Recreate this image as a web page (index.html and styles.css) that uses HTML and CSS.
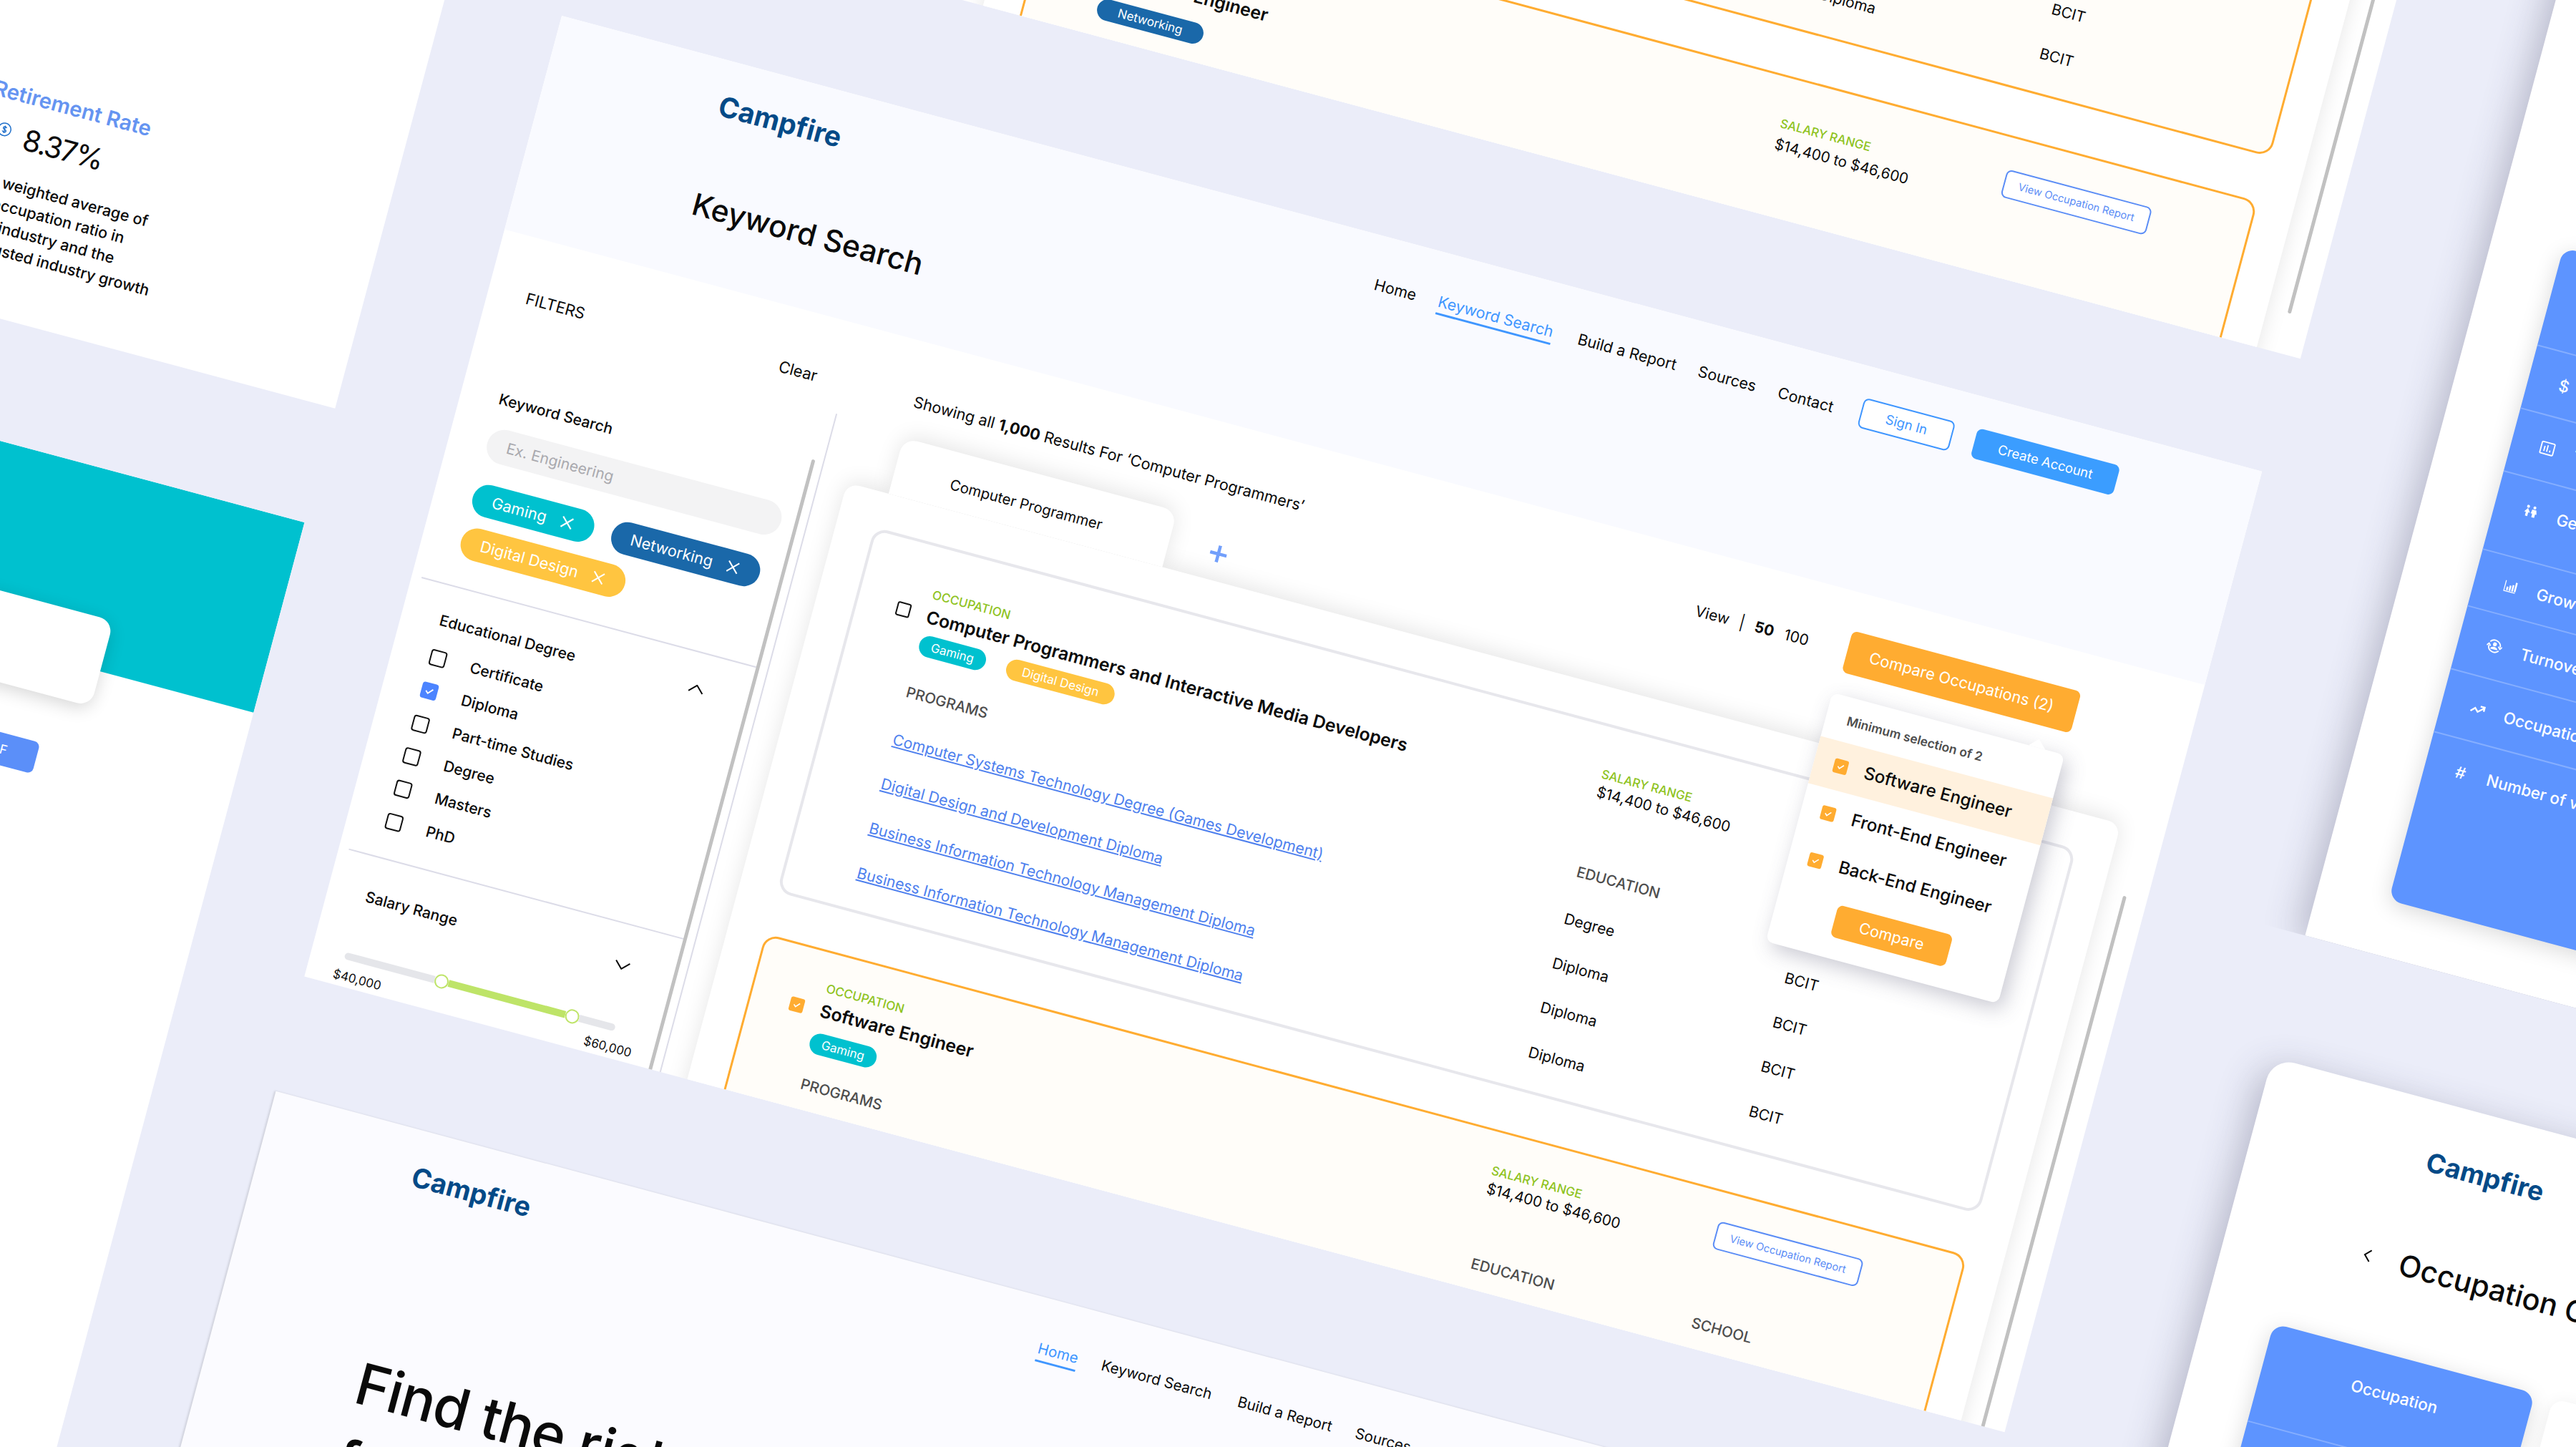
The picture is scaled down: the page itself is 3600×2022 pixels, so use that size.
FILE: index.html
```html
<!DOCTYPE html>
<html lang="en">
<head>
    <meta charset="UTF-8">
    <meta name="viewport" content="width=device-width, initial-scale=1.0">
    <title>Campfire</title>
    <link rel="stylesheet" href="styles.css">
</head>
<body>
<div class="stage">
<div class="canvas">

    <!-- Report detail, top left -->
    <section class="board board-rate">
        <h3 class="rate-title">Retirement Rate</h3>
        <div class="rate-value">
            <svg class="coin" viewBox="0 0 20 20"><circle cx="10" cy="10" r="8.8"/><path d="M12.4 7.6c-.4-1-1.3-1.3-2.4-1.3-1.300 0-2.300.6-2.300 1.800 0 2.600 4.800 1.200 4.800 3.900 0 1.200-1.100 1.800-2.500 1.800-1.300 0-2.300-.5-2.600-1.600M10 4.800v10.400"/></svg>
            <span>8.37%</span>
        </div>
        <p class="rate-text">The weighted average of<br>the occupation ratio in<br>each industry and the<br>unadjusted industry growth</p>
    </section>

    <!-- Landing banner, bottom left -->
    <section class="board board-banner">
        <div class="banner-teal"></div>
        <div class="banner-card"></div>
        <a class="btn-pdf">PDF</a>
    </section>

    <!-- Keyword search scrolled down, top -->
    <section class="board board-top">
        <div class="results">
            <div class="panel panel-top">
                <article class="card card-selected card-tail">
                    <div class="row"><a class="link">Business Information Technology Management Diploma</a><span>Diploma</span><span>BCIT</span></div>
                    <div class="row"><a class="link">Business Information Technology Management Diploma</a><span>Diploma</span><span>BCIT</span></div>
                </article>
                <article class="card card-selected card-low">
                    <div class="card-head">
                        <span class="check check-sm check-orange"><svg viewBox="0 0 16 16"><path d="M4 8.300l2.800 2.700L12 5.300"/></svg></span>
                        <div class="occupation">
                            <span class="eyebrow">OCCUPATION</span>
                            <h2>Software Engineer</h2>
                            <div class="tags"><span class="tag tag-blue">Networking</span></div>
                        </div>
                        <div class="salary">
                            <span class="eyebrow">SALARY RANGE</span>
                            <span class="amount">$14,400 to $46,600</span>
                        </div>
                        <a class="btn-report">View Occupation Report</a>
                    </div>
                </article>
            </div>
            <div class="scrollbar scrollbar-top"></div>
        </div>
    </section>

    <!-- Keyword search -->
    <section class="board board-search">
        <header class="header">
            <div class="header-top">
                <div class="logo">Campfire</div>
                <nav class="nav">
                    <a>Home</a>
                    <a class="active">Keyword Search</a>
                    <a>Build a Report</a>
                    <a>Sources</a>
                    <a>Contact</a>
                </nav>
                <a class="btn btn-outline">Sign In</a>
                <a class="btn btn-solid">Create Account</a>
            </div>
            <h1>Keyword Search</h1>
        </header>

        <div class="content">
            <aside class="sidebar">
                <div class="filters-head"><span>FILTERS</span><span>Clear</span></div>
                <div class="filters">
                    <div class="groups">
                        <div class="group group-keyword">
                            <div class="label">Keyword Search</div>
                            <div class="input">Ex. Engineering</div>
                            <div class="chips">
                                <span class="chip chip-teal">Gaming <svg viewBox="0 0 18 18"><path d="M2 2l14 14M16 2L2 16"/></svg></span>
                                <span class="chip chip-blue">Networking <svg viewBox="0 0 18 18"><path d="M2 2l14 14M16 2L2 16"/></svg></span>
                                <span class="chip chip-yellow">Digital Design <svg viewBox="0 0 18 18"><path d="M2 2l14 14M16 2L2 16"/></svg></span>
                            </div>
                        </div>
                        <div class="group group-degree">
                            <div class="label">Educational Degree <svg viewBox="0 0 22 12"><path d="M1 11L11 1l10 10"/></svg></div>
                            <ul class="options">
                                <li><span class="check"></span>Certificate</li>
                                <li><span class="check check-blue"><svg viewBox="0 0 16 16"><path d="M4 8.300l2.800 2.700L12 5.300"/></svg></span>Diploma</li>
                                <li><span class="check"></span>Part-time Studies</li>
                                <li><span class="check"></span>Degree</li>
                                <li><span class="check"></span>Masters</li>
                                <li><span class="check"></span>PhD</li>
                            </ul>
                        </div>
                        <div class="group group-salary">
                            <div class="label">Salary Range <svg viewBox="0 0 22 12"><path d="M1 1l10 10L21 1"/></svg></div>
                            <div class="slider">
                                <span class="track track-start"></span>
                                <span class="knob"></span>
                                <span class="track track-fill"></span>
                                <span class="knob"></span>
                                <span class="track track-end"></span>
                            </div>
                            <div class="slider-labels"><span>$40,000</span><span>$60,000</span></div>
                        </div>
                    </div>
                    <div class="scrollbar scrollbar-side"></div>
                </div>
            </aside>

            <main class="main">
                <div class="toolbar">
                    <div class="summary">Showing all <b>1,000</b> Results For ‘Computer Programmers’</div>
                    <div class="view"><span>View</span><span>|</span><b>50</b><span>100</span></div>
                    <div class="compare">
                        <a class="btn-compare">Compare Occupations (2)</a>
                        <div class="popup">
                            <div class="popup-note">Minimum selection of 2</div>
                            <div class="popup-item current"><span class="check check-sm check-orange"><svg viewBox="0 0 16 16"><path d="M4 8.300l2.800 2.700L12 5.300"/></svg></span>Software Engineer</div>
                            <div class="popup-item"><span class="check check-sm check-orange"><svg viewBox="0 0 16 16"><path d="M4 8.300l2.800 2.700L12 5.300"/></svg></span>Front-End Engineer</div>
                            <div class="popup-item"><span class="check check-sm check-orange"><svg viewBox="0 0 16 16"><path d="M4 8.300l2.800 2.700L12 5.300"/></svg></span>Back-End Engineer</div>
                            <a class="popup-btn">Compare</a>
                        </div>
                    </div>
                </div>
                <div class="tabs">
                    <div class="tab">Computer Programmer</div>
                    <svg class="plus" viewBox="0 0 24 24"><path d="M12 0v24M0 12h24"/></svg>
                </div>
                <div class="results">
                    <div class="panel">
                        <article class="card">
                            <div class="card-head">
                                <span class="check check-sm"></span>
                                <div class="occupation">
                                    <span class="eyebrow">OCCUPATION</span>
                                    <h2>Computer Programmers and Interactive Media Developers</h2>
                                    <div class="tags"><span class="tag tag-teal">Gaming</span><span class="tag tag-yellow">Digital Design</span></div>
                                </div>
                                <div class="salary">
                                    <span class="eyebrow">SALARY RANGE</span>
                                    <span class="amount">$14,400 to $46,600</span>
                                </div>
                            </div>
                            <div class="row row-head"><span>PROGRAMS</span><span>EDUCATION</span></div>
                            <div class="row"><a class="link">Computer Systems Technology Degree (Games Development)</a><span>Degree</span><span>BCIT</span></div>
                            <div class="row"><a class="link">Digital Design and Development Diploma</a><span>Diploma</span><span>BCIT</span></div>
                            <div class="row"><a class="link">Business Information Technology Management Diploma</a><span>Diploma</span><span>BCIT</span></div>
                            <div class="row"><a class="link">Business Information Technology Management Diploma</a><span>Diploma</span><span>BCIT</span></div>
                        </article>
                        <article class="card card-selected card-compact">
                            <div class="card-head">
                                <span class="check check-sm check-orange"><svg viewBox="0 0 16 16"><path d="M4 8.300l2.800 2.700L12 5.300"/></svg></span>
                                <div class="occupation">
                                    <span class="eyebrow">OCCUPATION</span>
                                    <h2>Software Engineer</h2>
                                    <div class="tags"><span class="tag tag-teal">Gaming</span></div>
                                </div>
                                <div class="salary">
                                    <span class="eyebrow">SALARY RANGE</span>
                                    <span class="amount">$14,400 to $46,600</span>
                                </div>
                                <a class="btn-report">View Occupation Report</a>
                            </div>
                            <div class="row row-head"><span>PROGRAMS</span><span>EDUCATION</span><span>SCHOOL</span></div>
                        </article>
                    </div>
                    <div class="scrollbar scrollbar-main"></div>
                </div>
            </main>
        </div>
    </section>

    <!-- Home page, bottom -->
    <section class="board board-home">
        <div class="header-top">
            <div class="logo">Campfire</div>
            <nav class="nav">
                <a class="active">Home</a>
                <a>Keyword Search</a>
                <a>Build a Report</a>
                <a>Sources</a>
                <a>Contact</a>
            </nav>
        </div>
        <h1 class="hero">Find the right career<br>for you</h1>
    </section>

    <!-- Comparison table, top right -->
    <section class="board board-table">
        <div class="table-card">
            <div class="table-head"></div>
            <div class="table-row"><span class="icon">$</span>Salary</div>
            <div class="table-row"><span class="icon"><svg viewBox="0 0 24 24"><rect x="2" y="3" width="20" height="18" rx="1.500"/><path d="M7.500 17V9M12 17V7M16.500 17v-3"/></svg></span>Total Jobs</div>
            <div class="table-row tall"><span class="icon"><svg class="fill" viewBox="0 0 24 24"><circle cx="6.500" cy="4.500" r="2.500"/><path d="M6.500 7.500l5 7h-3V21h-4v-6.500h-3z"/><circle cx="17.500" cy="4.500" r="2.500"/><path d="M14 8h7l2 7h-2.500v6h-5v-6H13z"/></svg></span>Gender</div>
            <div class="table-row short"><span class="icon"><svg class="fill" viewBox="0 0 24 24"><path d="M2 3h1.500v17H22v1.500H2zM6 13h3v6H6zM10.500 10h3v9h-3zM15 8h3v11h-3zM19.500 3h3v16h-3z"/></svg></span>Growth Rate</div>
            <div class="table-row"><span class="icon"><svg viewBox="0 0 24 24"><path d="M4 6.500a9.500 9.500 0 0 1 17 5M20 17.500a9.500 9.500 0 0 1-17-5M0 13l3-3.500L6 13M18 11l3 3.500 3-3.500"/><circle class="solid" cx="12" cy="9" r="3"/><path class="solid" d="M6.500 17c0-5 11-5 11 0z"/></svg></span>Turnover Rate</div>
            <div class="table-row"><span class="icon"><svg class="trend" viewBox="0 0 24 24"><path d="M2 17l6-6 5 5 9-8M15.500 7H22v6.500"/></svg></span>Occupation Growth</div>
            <div class="table-row last"><span class="icon">#</span>Number of vacancies</div>
        </div>
    </section>

    <!-- Comparison page, bottom right -->
    <section class="board board-compare">
        <div class="logo">Campfire</div>
        <div class="compare-title">
            <svg viewBox="0 0 12 20"><path d="M10 2L2 10l8 8"/></svg>
            <h1>Occupation Comparison</h1>
        </div>
        <div class="compare-cards">
            <div class="table-card"><div class="table-head">Occupation</div><div class="table-row"></div></div>
            <div class="compare-blank"></div>
        </div>
    </section>

</div>
</div>
</body>
</html>
```
FILE: styles.css
```css
* {
    box-sizing: border-box;
}
body {
    margin: 0;
    font-family: Inter, "Open Sans", sans-serif;
    font-size: 21px;
    color: #0a0a0a;
}
h1, h2, h3, p, ul {
    margin: 0;
    padding: 0;
    font-weight: 500;
    list-style: none;
}
svg {
    display: block;
    fill: none;
    stroke: currentColor;
}
.stage {
    position: relative;
    width: 3600px;
    height: 2022px;
    overflow: hidden;
    background: #ebedf9;
}
/* Everything sits on one tilted canvas */
.canvas {
    position: absolute;
    left: 0;
    top: 0;
    transform: rotate(15deg);
    transform-origin: 0 0;
}
.board {
    position: absolute;
    background: #fff;
    overflow: hidden;
    white-space: nowrap;
}
.logo {
    font-size: 39px;
    font-weight: 700;
    line-height: 64px;
    color: #044a87;
}

/* Report detail */
.board-rate {
    left: -400px;
    top: -600px;
    width: 1000px;
    height: 1030px;
    padding: 699px 0 0 424px;
}
.rate-title {
    font-size: 29.5px;
    font-weight: 600;
    line-height: 40px;
    color: #6594f1;
}
.rate-value {
    display: flex;
    align-items: center;
    gap: 19px;
    margin-top: 10px;
    padding-left: 19px;
    font-size: 41px;
    line-height: 60px;
    letter-spacing: -2px;
}
.coin {
    width: 20px;
    height: 20px;
    margin-top: -12px;
    color: #1f6fca;
    stroke-width: 1.5;
}
.rate-text {
    margin-top: 21px;
    font-size: 21.5px;
    line-height: 31px;
}

/* Banner */
.board-banner {
    left: -400px;
    top: 595px;
    width: 1000px;
    height: 1900px;
}
.banner-teal {
    height: 275px;
    background: #00c1cf;
}
.banner-card {
    position: relative;
    width: 778px;
    height: 124px;
    margin-top: -73px;
    border-radius: 20px;
    background: #fff;
    box-shadow: 0 6px 24px rgba(0, 0, 0, 0.16);
}
.btn-pdf {
    display: block;
    width: 150px;
    margin: 67px 0 0 573px;
    border-radius: 8px;
    background: #5b8ff9;
    color: #fff;
    font-size: 18px;
    line-height: 45px;
    padding-left: 73px;
}

/* Header */
.board-search {
    left: 764px;
    top: -182px;
    width: 2460px;
    height: 1390px;
}
.header {
    height: 309px;
    padding: 32px 193px 0 245px;
    background: #f9faff;
}
.header-top {
    display: flex;
    align-items: flex-start;
    height: 64px;
}
.nav {
    display: flex;
    gap: 32px;
    margin: 21px 39px 0 auto;
    font-size: 21.5px;
}
.nav a {
    line-height: 30px;
    height: 34px;
    border-bottom: 3px solid transparent;
}
.nav .active {
    color: #3f96ff;
    border-color: #3f96ff;
}
.board-search .nav .active {
    margin-right: 4px;
}
.btn {
    height: 43px;
    margin-top: 12px;
    border-radius: 8px;
    font-size: 18.5px;
    line-height: 43px;
    text-align: center;
}
.btn-outline {
    width: 132px;
    margin-right: 32px;
    border: 2px solid #3f96ff;
    line-height: 39px;
    background: #fff;
    color: #3f96ff;
}
.btn-solid {
    width: 206px;
    background: #3b9dff;
    color: #fff;
}
.header h1 {
    margin-top: 80px;
    font-size: 42.5px;
    line-height: 60px;
}
.content {
    display: flex;
}

/* Sidebar */
.sidebar {
    flex: 0 0 516px;
}
.filters-head {
    display: flex;
    justify-content: space-between;
    width: 421px;
    margin: 65px 0 24px 54px;
    font-size: 22px;
    line-height: 40px;
}
.filters {
    display: flex;
    height: 960px;
    border-right: 2px solid #dcdce8;
}
.groups {
    width: 498px;
    padding-left: 14px;
}
.group {
    padding-left: 40px;
    border-bottom: 2px solid #dcdce8;
}
.label {
    display: flex;
    justify-content: space-between;
    align-items: center;
    width: 382px;
    font-weight: 500;
    line-height: 40px;
}
.label svg {
    width: 22px;
    height: 12px;
    stroke-width: 2;
}
.group-keyword {
    padding-top: 82px;
    padding-bottom: 40px;
}
.input {
    width: 425px;
    height: 49px;
    margin-top: 19px;
    padding-left: 28px;
    border-radius: 25px;
    background: #f3f3f4;
    color: #a9a9ae;
    line-height: 49px;
}
.chips {
    display: flex;
    flex-wrap: wrap;
    gap: 17px 26px;
    margin-top: 31px;
}
.chip {
    display: flex;
    align-items: center;
    gap: 20px;
    height: 46px;
    padding: 0 29px 0 28px;
    border-radius: 23px;
    color: #fff;
    font-size: 21.7px;
}
.chip svg {
    width: 19px;
    height: 19px;
    stroke-width: 2;
}
.chip-teal, .tag-teal {
    background: #00c1cf;
}
.chip-blue, .tag-blue {
    background: #1a68a9;
}
.chip-yellow, .tag-yellow {
    background: #ffc540;
}
.group-degree {
    padding-top: 30px;
    padding-bottom: 28px;
}
.options {
    margin-top: 9px;
}
.options li {
    display: flex;
    align-items: center;
    gap: 35px;
    height: 47.3px;
}
.check {
    flex: none;
    width: 23px;
    height: 23px;
    border: 2px solid #111;
    border-radius: 4px;
    color: #fff;
}
.check svg {
    stroke-width: 1.6;
}
.check-sm {
    width: 20px;
    height: 20px;
    border-radius: 3px;
}
.check-blue {
    border-color: #4c84ff;
    background: #4c84ff;
}
.check-orange {
    border-color: #ffac31;
    background: #ffac31;
}
.group-salary {
    padding-top: 37px;
    border-bottom: 0;
}
.slider {
    display: flex;
    align-items: center;
    width: 391px;
    height: 20px;
    margin: 57px 0 0 -7px;
}
.track {
    height: 10px;
    background: #e5e6ea;
}
.track-start {
    width: 130px;
    border-radius: 5px 0 0 5px;
}
.track-fill {
    width: 169px;
    background: #bee468;
}
.track-end {
    flex: 1;
    border-radius: 0 5px 5px 0;
}
.knob {
    width: 20px;
    height: 20px;
    border: 2px solid #bee468;
    border-radius: 50%;
    background: #fff;
}
.slider-labels {
    display: flex;
    justify-content: space-between;
    width: 431px;
    margin: 8px 0 0 -16px;
    font-size: 17px;
    line-height: 20px;
}
.scrollbar {
    width: 5px;
    border-radius: 3px;
    background: #c1c1c1;
}
.scrollbar-side {
    margin-top: 70px;
}

/* Results */
.toolbar {
    display: flex;
    align-items: center;
    width: 1780px;
    height: 59px;
    margin-top: 54px;
    padding-left: 99px;
}
.summary {
    font-size: 21.6px;
}
.view {
    display: flex;
    gap: 15px;
    margin: 0 56px 0 auto;
}
.compare {
    position: relative;
    z-index: 3;
}
.btn-compare {
    display: block;
    width: 331px;
    border-radius: 8px;
    background: #ffac31;
    color: #fff;
    font-size: 21.8px;
    line-height: 60px;
    text-align: center;
}
.tabs {
    position: relative;
    z-index: 1;
    display: flex;
    height: 81px;
    margin: 24px 0 0 98px;
}
.tab {
    width: 396px;
    padding-left: 80px;
    border-radius: 20px 20px 0 0;
    background: #fff;
    box-shadow: 0 -5px 30px rgba(0, 0, 0, 0.1);
    clip-path: inset(-50px -50px 0 -50px);
    font-size: 20.3px;
    line-height: 92px;
}
.plus {
    width: 24px;
    height: 24px;
    margin: 31px 0 0 59px;
    color: #729ffb;
    stroke-width: 4.5;
}
.results {
    display: flex;
}
.panel {
    width: 1843px;
    height: 900px;
    margin-left: 38px;
    padding: 50px 0 0 53px;
    border-radius: 18px;
    background: #fff;
    box-shadow: 0 -5px 30px rgba(0, 0, 0, 0.1);
}
.scrollbar-main {
    margin: 96px 0 0 29px;
}
.card {
    width: 1739px;
    height: 528px;
    padding: 55px 0 0 55px;
    border: 4px solid #e7e7ec;
    border-radius: 20px;
}
.card-selected {
    border-color: #ffac31;
    border-width: 3px;
    background: #fffdf9;
}
.card-head {
    display: grid;
    grid-template-columns: 44px 968px 319px auto;
    align-items: start;
}
.card-head .check {
    margin-top: 32px;
}
.eyebrow {
    display: block;
    color: #8fc31f;
    font-size: 17px;
    font-weight: 500;
    line-height: 22px;
}
.occupation h2 {
    margin-top: 5px;
    font-size: 24.8px;
    font-weight: 600;
    line-height: 32px;
}
.tags {
    display: flex;
    gap: 30px;
    margin-top: 9px;
}
.tag {
    padding: 0 17px;
    border-radius: 15px;
    color: #fff;
    font-size: 17px;
    line-height: 30px;
}
.tag-yellow {
    padding: 0 23px;
}
.amount {
    display: block;
    margin-top: 1px;
    font-size: 20.6px;
    line-height: 28px;
}
.row {
    display: grid;
    grid-template-columns: 970px 319px auto;
    margin-left: 44px;
    font-size: 21px;
    line-height: 64.2px;
}
.row-head {
    margin-top: 34px;
    margin-bottom: 16px;
    font-size: 20.5px;
    font-weight: 500;
    line-height: 40px;
    color: #4d4d4d;
}
.link {
    margin-left: -1px;
    font-size: 21.2px;
    color: #4d7fee;
    text-decoration: underline;
}
.btn-report {
    width: 210px;
    height: 40px;
    border: 2px solid #5b8df6;
    border-radius: 8px;
    background: #fff;
    color: #5b8df6;
    font-size: 14.6px;
    line-height: 36px;
    text-align: center;
}
.card-compact {
    margin-top: 60px;
    padding-top: 38px;
}
.card-compact .check {
    margin-top: 34px;
}
.card-compact .tags {
    margin: 15px 0 0 -3px;
}
.card-compact .row-head {
    margin-top: 25px;
}
.card-compact .salary {
    margin: 5px 0 0 -4px;
}
.card-compact .btn-report {
    margin: 2px 0 0 2px;
}

/* Compare dropdown */
.popup {
    position: absolute;
    top: 91px;
    right: 0;
    width: 336px;
    height: 360px;
    padding-top: 12px;
    border-radius: 10px;
    background: #fff;
    box-shadow: 8px 8px 28px rgba(80, 80, 110, 0.3);
}
.popup::before {
    content: "";
    position: absolute;
    top: -12px;
    right: 28px;
    border: 12px solid transparent;
    border-top: 0;
    border-bottom-color: #fff;
}
.popup-note {
    padding-left: 30px;
    color: #4d4d4d;
    font-size: 17.4px;
    font-weight: 600;
    line-height: 42px;
    margin-bottom: 9px;
}
.popup-item {
    display: flex;
    align-items: center;
    gap: 24px;
    height: 68px;
    padding-left: 28px;
    font-size: 24.2px;
    font-weight: 500;
}
.popup-item.current {
    background: #fff1de;
}
.popup-btn {
    display: block;
    width: 166px;
    margin: 17px 0 0 85px;
    border-radius: 8px;
    background: #ffac31;
    color: #fff;
    font-size: 21.5px;
    line-height: 46px;
    text-align: center;
}

/* Keyword search, scrolled down */
.board-top {
    left: 775px;
    top: -1048px;
    width: 2460px;
    height: 700px;
}
.panel-top {
    margin-left: 554px;
    padding-top: 0;
}
.card-tail {
    height: 459px;
    margin-top: -20px;
    padding-top: 303px;
}
.card-low {
    margin-top: 64px;
    padding-top: 61px;
}
.card-low h2 {
    margin-left: 12px;
}
.card-low .tags {
    margin-top: 20px;
}
.card-low .tag {
    padding: 0 30px;
}
.card-low .salary {
    margin: -8px 0 0 -4px;
}
.card-low .amount {
    margin-top: 5px;
}
.card-low .btn-report {
    margin-top: -17px;
}
.scrollbar-top {
    height: 643px;
    margin-left: 29px;
}

/* Home */
.board-home {
    left: 767px;
    top: 1373px;
    width: 2460px;
    height: 800px;
    padding: 33px 0 0 215px;
    background: #fbfbff;
    box-shadow: -2px 0 3px rgba(0, 0, 0, 0.12);
}
.board-home .logo {
    flex: 0 0 907px;
    font-size: 37.8px;
}
.board-home .nav {
    margin: 23px 0 0;
    gap: 34px;
    font-size: 20.6px;
}
.board-home .nav a:nth-child(2) {
    margin-right: 4px;
}
.hero {
    margin-top: 211px;
    font-size: 80px;
    line-height: 110px;
    letter-spacing: -1px;
}

/* Comparison boards */
.board-table {
    left: 3450px;
    top: -1000px;
    width: 1400px;
    height: 1429px;
    padding: 407px 0 0 100px;
    overflow: visible;
    box-shadow: -10px 8px 50px rgba(60, 60, 90, 0.3);
    clip-path: inset(-80px -80px 0 -80px);
}
.table-card {
    width: 900px;
    height: 944px;
    border-radius: 18px;
    background: #5d94ff;
    color: #fff;
    box-shadow: 0 6px 30px rgba(0, 0, 0, 0.15);
}
.table-head {
    height: 140px;
    font-size: 22.6px;
    font-weight: 500;
    line-height: 110px;
    text-align: center;
}
.table-row {
    display: flex;
    height: 91px;
    padding-left: 30px;
    border-top: 2px solid #85aeff;
    font-size: 22.4px;
    font-weight: 500;
    line-height: 89px;
}
.table-row.tall {
    height: 113px;
}
.table-row.short {
    height: 82px;
    line-height: 80px;
}
.icon {
    display: flex;
    justify-content: center;
    align-items: center;
    width: 42px;
    height: 88px;
    margin-right: 17px;
}
.short .icon {
    height: 80px;
}
.icon svg {
    width: 22px;
    height: 22px;
    stroke-width: 2;
}
.icon .trend {
    stroke-width: 2.6;
}
.icon .fill {
    width: 20px;
    height: 20px;
}
.icon .fill, .icon .solid {
    fill: currentColor;
    stroke: none;
}
.board-compare {
    left: 3450px;
    top: 605px;
    width: 1400px;
    height: 900px;
    padding: 53px 0 0 98px;
    overflow: visible;
    border-radius: 32px;
    box-shadow: -10px 12px 50px rgba(60, 60, 90, 0.3);
}
.board-compare .logo {
    padding-left: 148px;
    font-size: 37.3px;
}
.compare-title {
    display: flex;
    align-items: center;
    gap: 40px;
    margin-top: 85px;
    padding-left: 96px;
}
.compare-title svg {
    width: 12px;
    height: 20px;
    stroke-width: 2;
}
.compare-title h1 {
    font-size: 41.5px;
    line-height: 62px;
}
.compare-cards {
    display: flex;
    gap: 26px;
    margin-top: 95px;
}
.board-compare .table-card {
    width: 378px;
}
.compare-blank {
    width: 378px;
    height: 944px;
    border-radius: 18px;
    background: #fff;
    box-shadow: 0 4px 24px rgba(0, 0, 0, 0.08);
}
```
